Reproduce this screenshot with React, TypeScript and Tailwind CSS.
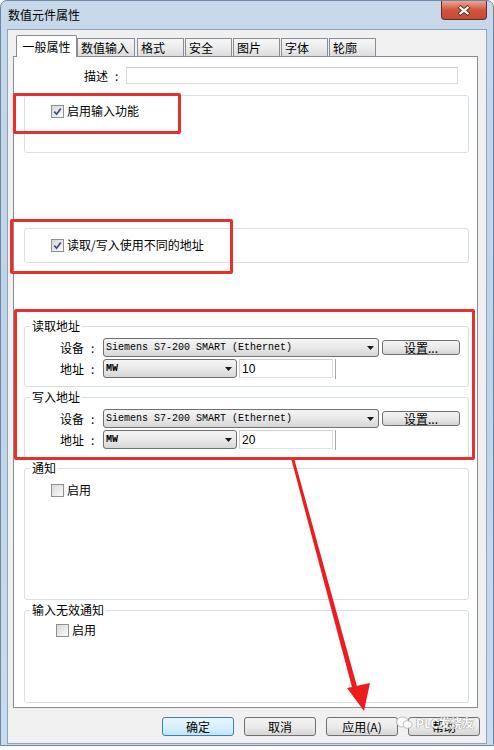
import React from "react";

// small checkbox in the Win7 style
function CheckBox({ checked }: { checked?: boolean }) {
  return (
    <span className="inline-flex w-[13px] h-[13px] shrink-0 items-center justify-center border border-[#8e8f8f] bg-linear-to-br from-[#d8d8d8] to-[#fbfbfb]">
      {checked && (
        <svg width="9" height="9" viewBox="0 0 9 9">
          <path d="M1.3 4.6 L3.6 7.2 L7.8 1.4" fill="none" stroke="#3d4f80" strokeWidth="1.7" />
        </svg>
      )}
    </span>
  );
}

function Combo({ width, text, bold }: { width: string; text: string; bold?: boolean }) {
  return (
    <div
      className={`flex items-center h-[19px] border border-[#707070] rounded-[3px] bg-linear-to-b from-[#f4f4f4] via-[#e9e9e9] to-[#d6d6d6] pl-[2px] pr-[4px] ${width}`}
    >
      <span
        className={`font-['Liberation_Mono',monospace] text-[10px] leading-none text-black ${bold ? "font-bold" : ""}`}
      >
        {text}
      </span>
      <svg className="ml-auto" width="7" height="4" viewBox="0 0 7 4">
        <path d="M0 0 H7 L3.5 4 Z" fill="#1a1a1a" />
      </svg>
    </div>
  );
}

function AddressGroup({ title, value }: { title: string; value: string }) {
  return (
    <fieldset className="ml-[10px] mr-[8px] border border-[#d5dfe5] rounded-[3px] pt-[5px] pb-[8px] flex flex-col gap-[2px]">
      <legend className="ml-[5px] px-[2px] text-[12px] leading-[14px]">{title}</legend>
      <div className="flex items-center h-[19px]">
        <div className="flex items-center w-[78px] pl-[35px] text-[12px]">
          <span>设备</span>
          <span className="ml-[7px]">:</span>
        </div>
        <Combo width="w-[276px]" text="Siemens S7-200 SMART (Ethernet)" />
        <button className="ml-[3px] w-[78px] h-[15px] border border-[#707070] rounded-[3px] bg-linear-to-b from-[#f4f4f4] via-[#e9e9e9] to-[#d3d3d3] text-[12px] leading-none text-black flex items-center justify-center">
          设置...
        </button>
      </div>
      <div className="flex items-center h-[19px]">
        <div className="flex items-center w-[78px] pl-[35px] text-[12px]">
          <span>地址</span>
          <span className="ml-[7px]">:</span>
        </div>
        <Combo width="w-[134px]" text="MW" bold />
        <div className="ml-[2px] w-[94px] h-[19px] bg-white border border-[#e2e2e2] border-t-[#cfcfcf] border-l-[#cfcfcf] flex items-center pl-[2px] text-[12px] font-['Liberation_Sans',sans-serif]">
          {value}
        </div>
        <div className="ml-[2px] w-px h-[20px] bg-[#a8a8a8]" />
      </div>
    </fieldset>
  );
}

function Btn({ label, primary }: { label: string; primary?: boolean }) {
  return (
    <button
      className={`w-[72px] h-[19px] rounded-[3px] border text-[12px] leading-none text-black flex items-center justify-center ${
        primary
          ? "border-[#3c7fb1] bg-linear-to-b from-[#eaf6fd] via-[#d9f0fc] to-[#bee6fd]"
          : "border-[#707070] bg-linear-to-b from-[#f2f2f2] via-[#ebebeb] to-[#d6d6d6]"
      }`}
    >
      {label}
    </button>
  );
}

const tabs = ["数值输入", "格式", "安全", "图片", "字体", "轮廓"];

export default function App() {
  return (
    <div className="relative w-[494px] h-[750px] bg-white overflow-hidden font-['Noto_Sans_CJK_SC','Noto_Sans',sans-serif] text-black">
      {/* window frame */}
      <div className="h-[746px] rounded-t-[7px] border border-[#6d86a3] bg-linear-to-b from-[#c6d8ea] via-[#bfd3e8] to-[#c9dbee] flex flex-col">
        {/* title bar */}
        <div className="h-[28px] flex items-start justify-between">
          <span className="pl-[7px] pt-[6px] text-[12px] leading-[16px]">数值元件属性</span>
          <div className="mr-[6px] w-[46px] h-[19px] rounded-b-[4px] border border-t-0 border-[#6e2a1f] bg-linear-to-b from-[#e9a594] via-[#d0553c] to-[#c44b35] flex items-center justify-center">
            <svg width="14" height="11" viewBox="0 0 14 11">
              <path d="M2 1.5 L12 9.5 M12 1.5 L2 9.5" stroke="#5b1d12" strokeWidth="4" />
              <path d="M2.5 1.8 L11.5 9.2 M11.5 1.8 L2.5 9.2" stroke="#ffffff" strokeWidth="2.3" />
            </svg>
          </div>
        </div>

        {/* client area */}
        <div className="mx-[6px] bg-[#f0f0f0] border border-[#8fa3bb] flex flex-col">
          {/* tab strip */}
          <div className="relative z-10 mt-[5px] ml-[8px] -mb-px flex items-end h-[22px]">
            <div className="w-[61px] h-[22px] bg-white border border-b-0 border-[#898c95] rounded-t-[2px] flex items-center justify-center text-[12px]">
              一般属性
            </div>
            {tabs.map((t, i) => (
              <div
                key={t}
                className={`h-[18px] mb-px border border-b-0 border-[#898c95] bg-linear-to-b from-[#f6f6f6] via-[#ececec] to-[#dcdcdc] flex items-center pl-[3px] text-[12px] ${
                  i === 0 ? "w-[58px] mr-[2px]" : "w-[47px] mr-px"
                }`}
              >
                {t}
              </div>
            ))}
          </div>

          {/* tab page */}
          <div className="ml-[5px] mr-[8px] h-[652px] bg-white border border-[#898c95] flex flex-col">
            <div className="mt-[10px] flex items-center text-[12px] leading-[15px]">
              <span className="pl-[70px]">描述</span>
              <span className="ml-[7px]">:</span>
              <div className="ml-[8px] w-[332px] h-[17px] border border-[#dadada] border-t-[#c9c9c9]" />
            </div>

            <div className="mt-[11px] ml-[10px] mr-[8px] h-[58px] border border-[#d5dfe5] rounded-[3px] pt-[8px] pl-[26px] flex items-start">
              <div className="flex items-center gap-[3px] text-[12px] leading-[14px]">
                <CheckBox checked />
                <span>启用输入功能</span>
              </div>
            </div>

            <div className="mt-[75px] ml-[10px] mr-[8px] h-[35px] border border-[#d5dfe5] rounded-[3px] pl-[26px] pb-px flex items-center">
              <div className="flex items-center gap-[3px] text-[12px] leading-[14px]">
                <CheckBox checked />
                <span>读取/写入使用不同的地址</span>
              </div>
            </div>

            <div className="mt-[56px] flex flex-col gap-[3px]">
              <AddressGroup title="读取地址" value="10" />
              <AddressGroup title="写入地址" value="20" />
            </div>

            <fieldset className="mt-[3px] ml-[10px] mr-[8px] h-[139px] border border-[#d5dfe5] rounded-[3px] pt-[8px] pl-[26px]">
              <legend className="-ml-[21px] px-[2px] text-[12px] leading-[14px]">通知</legend>
              <div className="flex items-center gap-[3px] text-[12px] leading-[14px]">
                <CheckBox />
                <span>启用</span>
              </div>
            </fieldset>

            <fieldset className="mt-[3px] ml-[10px] mr-[8px] h-[100px] border border-[#d5dfe5] rounded-[3px] pt-[6px] pl-[31px]">
              <legend className="-ml-[26px] px-[2px] text-[12px] leading-[14px]">输入无效通知</legend>
              <div className="flex items-center gap-[3px] text-[12px] leading-[14px]">
                <CheckBox />
                <span>启用</span>
              </div>
            </fieldset>
          </div>

          {/* dialog buttons */}
          <div className="mt-[9px] mb-[7px] pr-[6px] flex justify-end gap-[10px]">
            <Btn label="确定" primary />
            <Btn label="取消" />
            <Btn label="应用(A)" />
            <Btn label="帮助" />
          </div>
        </div>
      </div>

      {/* red annotation boxes */}
      <div className="absolute left-[13px] top-[93px] w-[168px] h-[41px] border-[3px] border-[#e8302a] rounded-[2px]" />
      <div className="absolute left-[10px] top-[219px] w-[223px] h-[55px] border-[3px] border-[#e8302a] rounded-[2px]" />
      <div className="absolute left-[14px] top-[309px] w-[461px] h-[151px] border-[3px] border-[#e8302a] rounded-[2px]" />

      {/* red arrow */}
      <svg className="absolute left-0 top-0 pointer-events-none" width="494" height="750" viewBox="0 0 494 750">
        <polygon points="291.5,460 294.5,460 358,690 353,691" fill="#ee1c1c" />
        <polygon points="347,688 370,683 364,711" fill="#ee1c1c" />
      </svg>

      {/* watermark */}
      <div className="absolute left-[396px] top-[716px] flex items-center gap-[3px] opacity-90">
        <svg width="17" height="14" viewBox="0 0 17 14">
          <ellipse cx="6.5" cy="6" rx="6" ry="5" fill="#ffffff" stroke="#b5b5b5" strokeWidth="1" />
          <ellipse cx="11.5" cy="8.5" rx="4.5" ry="3.8" fill="#ffffff" stroke="#b5b5b5" strokeWidth="1" />
        </svg>
        <span className="text-[12px] leading-[14px] text-white font-bold [text-shadow:0_0_1px_#777,0_0_1px_#777]">
          PLC发烧友
        </span>
      </div>
    </div>
  );
}
